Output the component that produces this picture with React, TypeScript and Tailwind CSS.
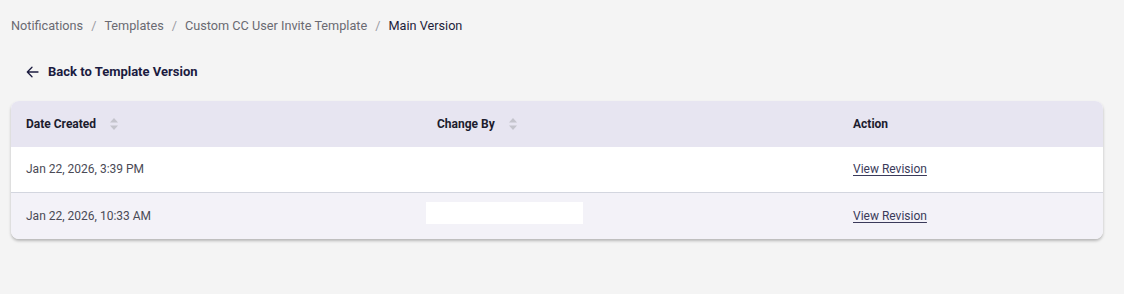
import * as React from 'react';

const font = { fontFamily: 'Roboto, "Noto Sans", sans-serif' };

function SortIcon() {
  return (
    <svg width="8" height="14" viewBox="0 0 8 14" className="ml-[14px]">
      <path d="M4 1 L8 5.5 L0 5.5 Z" fill="#c4c4cc" />
      <path d="M4 13 L8 8.5 L0 8.5 Z" fill="#c4c4cc" />
    </svg>
  );
}

const rows = [
  { date: 'Jan 22, 2026, 3:39 PM', by: false },
  { date: 'Jan 22, 2026, 10:33 AM', by: true },
];

export default function App() {
  return (
    <div className="min-h-[294px] w-[1124px] bg-[#f4f4f4]" style={font}>
      <div className="flex items-center gap-[8px] px-[11px] pt-[17px] text-[12.7px] leading-[18px] text-[#6a6a72]">
        <span>Notifications</span>
        <span className="text-[#9a9aa2]">/</span>
        <span>Templates</span>
        <span className="text-[#9a9aa2]">/</span>
        <span>Custom CC User Invite Template</span>
        <span className="text-[#9a9aa2]">/</span>
        <span className="text-[#1d1d3a]">Main Version</span>
      </div>

      <a className="mt-[27px] ml-[26px] flex items-center gap-[9px] text-[13px] font-bold text-[#1b1b3f]">
        <svg width="13" height="12" viewBox="0 0 13 12" fill="none" stroke="#1b1b3f" strokeWidth="1.3" strokeLinecap="round" strokeLinejoin="round">
          <path d="M12 6 H1.5 M6 1.3 L1.3 6 L6 10.7" />
        </svg>
        <span>Back to Template Version</span>
      </a>

      <div className="ml-[11px] mt-[19px] w-[1092px] overflow-hidden rounded-[8px] bg-white shadow-[0_2px_3px_rgba(0,0,0,0.25)]">
        <div className="grid h-[46px] grid-cols-[411px_416px_1fr] items-center bg-[#e7e5f1] text-[12px] font-bold text-[#1c1c2e]">
          <div className="flex items-center px-[15px]">Date Created<SortIcon /></div>
          <div className="flex items-center px-[15px]">Change By<SortIcon /></div>
          <div className="px-[15px]">Action</div>
        </div>
        {rows.map((r, i) => (
          <div
            key={i}
            className={
              'grid h-[46px] grid-cols-[411px_416px_1fr] items-center text-[12px] text-[#4a4a56] ' +
              (i === 0 ? 'h-[45px] border-b border-[#d3d6df] bg-white' : 'bg-[#f3f2f8]')
            }
          >
            <div className="px-[15px]">{r.date}</div>
            <div className="px-[4px]">
              {r.by && <div className="mb-[6px] h-[22px] w-[157px] bg-white" />}
            </div>
            <div className="px-[15px]">
              <span className="text-[#3a3a5a] underline underline-offset-2">View Revision</span>
            </div>
          </div>
        ))}
      </div>
    </div>
  );
}
